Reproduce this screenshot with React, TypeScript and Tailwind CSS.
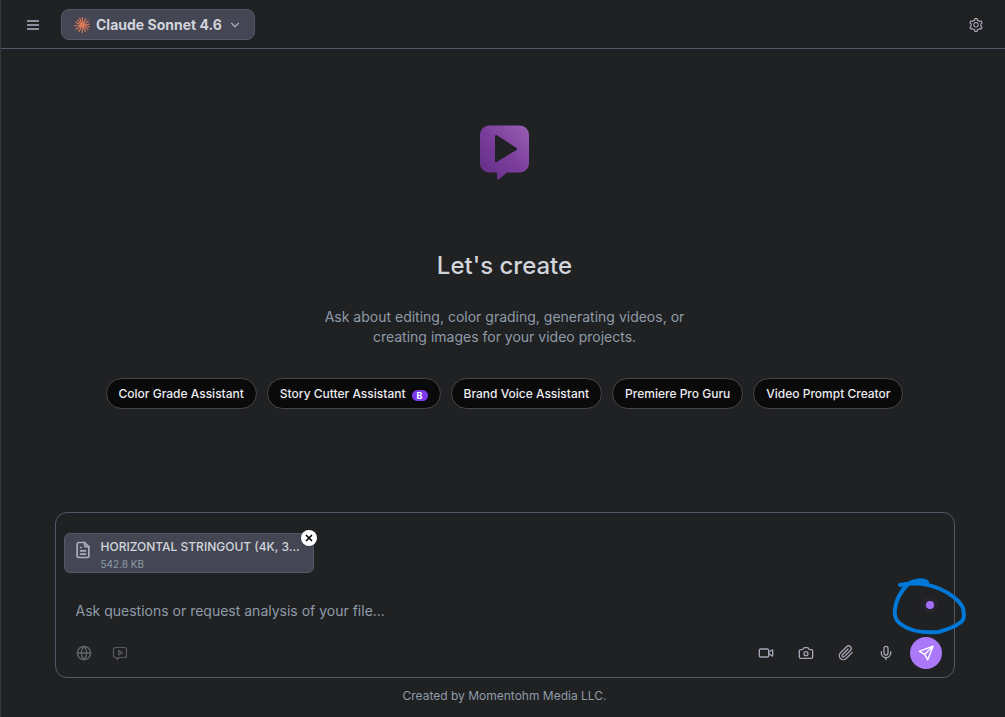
import { useState } from "react";
import { AiOutlineSetting } from "react-icons/ai";
import { FiPaperclip } from "react-icons/fi";
import { TbFileText } from "react-icons/tb";
import { Camera, ChevronDown, Globe, Mic, Video, X } from "lucide-react";

type Assistant = {
  name: string;
  badge?: string;
};

const assistants: Assistant[] = [
  { name: "Color Grade Assistant" },
  { name: "Story Cutter Assistant", badge: "B" },
  { name: "Brand Voice Assistant" },
  { name: "Premiere Pro Guru" },
  { name: "Video Prompt Creator" },
];

// ray end points of the model mark, centred on 0,0
const rays = [
  [0.5, -8], [4.2, -6.6], [6.6, -4.2], [7.8, -1], [7.8, 1.8], [6.4, 4.8],
  [3.6, 7], [0.4, 8], [-3.2, 7], [-6.2, 4.6], [-7.9, 1], [-6.8, -2.8],
  [-4.8, -5.2], [-2.4, -7.4],
];

function ModelMark() {
  return (
    <svg viewBox="-8 -8 16 16" className="size-4" aria-hidden="true">
      {rays.map(([x, y]) => (
        <line key={`${x},${y}`} x1="0" y1="0" x2={x} y2={y} stroke="#d97757" strokeWidth="1.2" />
      ))}
      <circle r="2.4" fill="#d97757" />
    </svg>
  );
}

function Logo() {
  return (
    <svg viewBox="0 0 49 55" className="h-[55px] w-[49px]" aria-hidden="true">
      <defs>
        <linearGradient id="logo-fill" x1="0" y1="1" x2="1" y2="0">
          <stop offset="0" stopColor="#5f2d85" />
          <stop offset="0.5" stopColor="#7b3d9c" />
          <stop offset="1" stopColor="#9a60b2" />
        </linearGradient>
      </defs>
      <path
        fill="url(#logo-fill)"
        fillRule="evenodd"
        d="M9 0.500H40a9 9 0 0 1 9 9V38.500a9 9 0 0 1-9 9H27L19 54.300q-2 1.200-2-1V47.500H9a9 9 0 0 1-9-9V9.500a9 9 0 0 1 9-9ZM15 11.500V35.500q0 2.400 2 1.200L36.500 25q1.300-1 0-2L17 10.300q-2-1.200-2 1.200Z"
      />
    </svg>
  );
}

function SendIcon() {
  return (
    <svg viewBox="0 0 16 16" className="size-4" fill="none" stroke="currentColor" strokeWidth="1.4" strokeLinecap="round" strokeLinejoin="round" aria-hidden="true">
      <path d="M15 1.200 1.300 6.300l5.400 3 3 5.500Z M15 1.200 6.700 9.300" />
    </svg>
  );
}

function VideoChatIcon() {
  return (
    <svg viewBox="0 0 16 16" className="size-4" fill="none" stroke="currentColor" strokeWidth="1.2" strokeLinejoin="round" aria-hidden="true">
      <path d="M3.500 2.500h9a2 2 0 0 1 2 2v6a2 2 0 0 1-2 2H7.500L5 14.500v-2H3.500a2 2 0 0 1-2-2v-6a2 2 0 0 1 2-2Z" />
      <path d="M6.800 5.500v4.500l3.700-2.250Z" />
    </svg>
  );
}

export default function App() {
  const [message, setMessage] = useState("");
  const [attached, setAttached] = useState(true);

  return (
    <div className="flex min-h-screen flex-col border-l border-[#343537] bg-[#202123] font-['Inter',sans-serif] text-[#d1d5db]">
      <header className="flex h-[49px] items-center border-b border-[#565869] pt-px pr-[21px] pl-6">
        <button type="button" aria-label="Menu" className="flex size-4 items-center justify-center text-[#8e8ea0]">
          <svg viewBox="0 0 12 10" className="h-2.5 w-3" fill="currentColor" aria-hidden="true">
            <path d="M0 0h12v2H0zM0 4h12v2H0zM0 8h12v2H0z" />
          </svg>
        </button>
        <button
          type="button"
          className="ml-5 flex h-[31px] items-center rounded-lg border border-[#565869] bg-[#444654] px-3"
        >
          <ModelMark />
          <span className="ml-1.5 text-sm font-bold">Claude Sonnet 4.6</span>
          <ChevronDown className="ml-1.5 size-3.5 text-[#acacbe]" />
        </button>
        <button type="button" aria-label="Settings" className="ml-auto text-[#acacbe]">
          <AiOutlineSetting className="size-4" />
        </button>
      </header>

      <main className="flex flex-1 flex-col items-center pl-[3px]">
        <section className="flex w-full flex-1 flex-col items-center pt-[76px]">
          <Logo />
          <h1 className="mt-[70px] text-2xl font-medium">Let's create</h1>
          <p className="mt-[25px] w-[400px] text-center text-sm leading-5 text-[#8e9ba8]">
            Ask about editing, color grading, generating videos, or creating images for your video projects.
          </p>
          <div className="mt-[31px] flex flex-wrap justify-center gap-2.5">
            {assistants.map((item) => (
              <button
                key={item.name}
                type="button"
                className="flex h-[31px] items-center gap-1.5 rounded-full border border-[#46474b] bg-[#0a0a0a] px-3 text-xs font-medium text-[#ececf1]"
              >
                {item.name}
                {item.badge && (
                  <span className="mt-1 flex h-[11px] w-4 items-center justify-center rounded-full bg-[#7c3aed] text-[9px] font-bold text-white">
                    {item.badge}
                  </span>
                )}
              </button>
            ))}
          </div>
        </section>

        <form
          className="relative flex w-[calc(100%-98px)] max-w-[900px] flex-col rounded-xl border border-[#565869] px-2 pt-5 pb-2"
          onSubmit={(e) => e.preventDefault()}
        >
          {attached && (
            <div className="relative flex h-10 w-[250px] items-center rounded-md border border-[#565869] bg-[#444654] pl-2">
              <TbFileText className="mb-1.5 size-5 shrink-0 text-[#acacbe]" />
              <div className="ml-2 pt-1">
                <div className="text-xs leading-4 font-medium whitespace-nowrap">
                  HORIZONTAL STRINGOUT (4K, 3...
                </div>
                <div className="mt-px text-[10px] leading-4 text-[#8e9ba8]">542.8 KB</div>
              </div>
              <button
                type="button"
                aria-label="Remove file"
                onClick={() => setAttached(false)}
                className="absolute -top-1 -right-1 flex size-4 items-center justify-center rounded-full bg-white text-black shadow"
              >
                <X className="size-2.5" strokeWidth={4} />
              </button>
            </div>
          )}

          <textarea
            rows={1}
            aria-label="Message"
            value={message}
            onChange={(e) => setMessage(e.target.value)}
            placeholder="Ask questions or request analysis of your file..."
            className="mt-7 h-5 w-full resize-none overflow-hidden bg-transparent px-3 text-sm leading-5 outline-none placeholder:text-[#8e9ba8]"
          />

          <div className="mt-4 flex items-center pr-1 pl-3">
            <button type="button" aria-label="Web search" className="text-[#63666c]">
              <Globe className="size-4" />
            </button>
            <button type="button" aria-label="Video chat" className="ml-5 text-[#5a5c61]">
              <VideoChatIcon />
            </button>
            <div className="ml-auto flex items-center gap-6 text-[#a4a4b3]">
              <button type="button" aria-label="Record video">
                <Video className="size-4" />
              </button>
              <button type="button" aria-label="Take photo">
                <Camera className="size-4" />
              </button>
              <button type="button" aria-label="Attach file">
                <FiPaperclip className="size-4" />
              </button>
              <button type="button" aria-label="Dictate">
                <Mic className="size-4" />
              </button>
            </div>
            <button
              type="submit"
              aria-label="Send"
              className="ml-4 flex size-8 items-center justify-center rounded-full bg-[#ab78f9] text-white"
            >
              <SendIcon />
            </button>
          </div>

          {/* status dot and the hand-drawn ring round it */}
          <span className="absolute right-5 bottom-[68px] size-2 rounded-full bg-[#a46dfb] shadow-[0_0_8px_rgba(164,109,251,0.3)]" />
          <svg
            viewBox="0 0 76 60"
            className="pointer-events-none absolute -right-3 bottom-10 h-[60px] w-[76px]"
            fill="none"
            stroke="#0078d7"
            strokeWidth="4"
            strokeLinecap="round"
            strokeLinejoin="round"
            aria-hidden="true"
          >
            <path d="M37 5C33 2 24 3 18 7C11 14 6 23 5 32C4 40 6 44 12 48C20 54 32 56 48 55C56 53 65 50 71 45C75 42 74 37 73 31C70 24 60 16 50 12C39 7 26 5 10 8" />
          </svg>
        </form>

        <footer className="pt-2 pb-3 text-xs leading-[19px] text-[#8e9ba8]">Created by Momentohm Media LLC.</footer>
      </main>
    </div>
  );
}
